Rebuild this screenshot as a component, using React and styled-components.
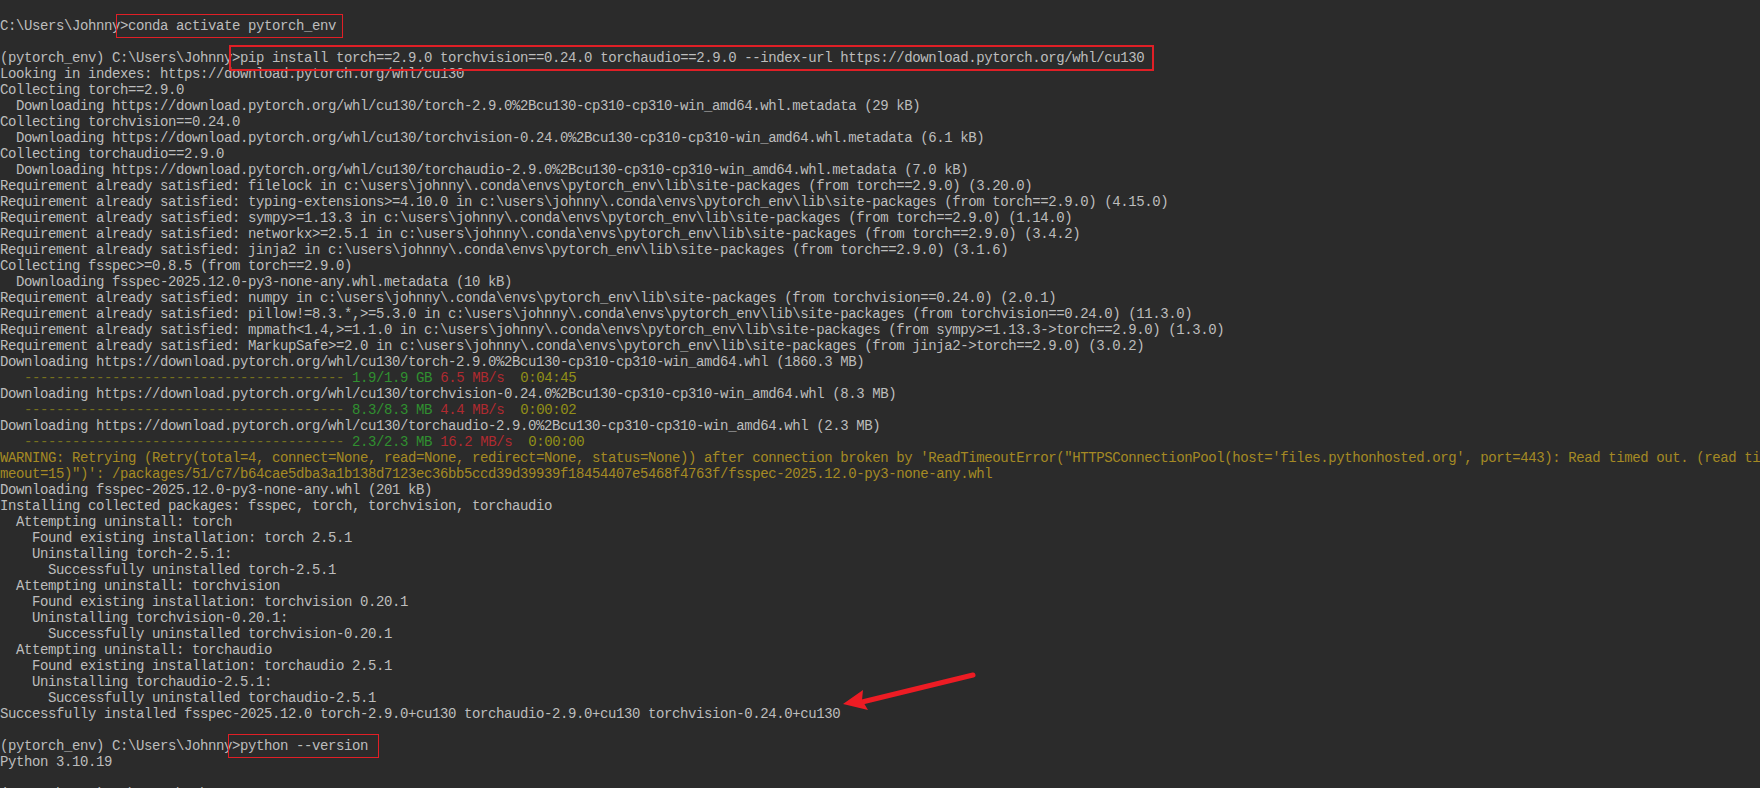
import React from "react";
import styled, { createGlobalStyle } from "styled-components";

const GlobalStyle = createGlobalStyle`
  html, body {
    margin: 0;
    padding: 0;
    background: #2b2b2b;
    overflow: hidden;
  }
`;

const Console = styled.div`
  position: relative;
  width: 1760px;
  height: 788px;
  box-sizing: border-box;
  padding-top: 3px;
  overflow: hidden;
  background: #2b2b2b;
  color: #bdbdbd;
  font-family: "Liberation Mono", monospace;
  font-size: 14px;
  letter-spacing: -0.4px;
`;

const Row = styled.div`
  height: 16px;
  line-height: 15px;
  white-space: pre;
  color: ${(p) => p.$color || "inherit"};
`;

// red rectangle somebody drew on the screenshot
const Mark = styled.span`
  position: relative;
  &::after {
    content: "";
    position: absolute;
    top: ${(p) => p.$top}px;
    bottom: ${(p) => p.$top}px;
    left: ${(p) => p.$left}px;
    right: ${(p) => p.$right}px;
    border: ${(p) => p.$weight}px solid #e01f26;
  }
`;

const Dash = styled.span`
  color: #77701f;
`;
const Done = styled.span`
  color: #309030;
`;
const Speed = styled.span`
  color: #b02a30;
`;
const Eta = styled.span`
  color: #929018;
`;

const ArrowSvg = styled.svg`
  position: absolute;
  left: 836px;
  top: 668px;
`;

const site = "c:\\users\\johnny\\.conda\\envs\\pytorch_env\\lib\\site-packages";
const whl = "https://download.pytorch.org/whl/cu130";
const bar = "-".repeat(40);
const WARN = "#a58a24";

const Progress = ({ done, speed, eta }) => (
  <Row>
    {"   "}
    <Dash>{bar}</Dash> <Done>{done}</Done> <Speed>{speed}</Speed> <Eta>{eta}</Eta>
  </Row>
);

const Prompt = ({ env, children, top, left, right, weight }) => (
  <Row>
    {env ? "(pytorch_env) " : ""}C:\Users\Johnny
    <Mark $top={top} $left={left} $right={right} $weight={weight}>{children}</Mark>
  </Row>
);

const App = () => (
  <>
    <GlobalStyle />
    <Console>
      <Row />
      <Prompt top={-4} left={-4} right={-7} weight={1}>{">conda activate pytorch_env"}</Prompt>
      <Row />
      <Prompt env top={-5} left={-3} right={-10} weight={2}>
        {`>pip install torch==2.9.0 torchvision==0.24.0 torchaudio==2.9.0 --index-url ${whl}`}
      </Prompt>
      <Row>Looking in indexes: {whl}</Row>
      <Row>Collecting torch==2.9.0</Row>
      <Row>{`  Downloading ${whl}/torch-2.9.0%2Bcu130-cp310-cp310-win_amd64.whl.metadata (29 kB)`}</Row>
      <Row>Collecting torchvision==0.24.0</Row>
      <Row>{`  Downloading ${whl}/torchvision-0.24.0%2Bcu130-cp310-cp310-win_amd64.whl.metadata (6.1 kB)`}</Row>
      <Row>Collecting torchaudio==2.9.0</Row>
      <Row>{`  Downloading ${whl}/torchaudio-2.9.0%2Bcu130-cp310-cp310-win_amd64.whl.metadata (7.0 kB)`}</Row>
      <Row>{`Requirement already satisfied: filelock in ${site} (from torch==2.9.0) (3.20.0)`}</Row>
      <Row>{`Requirement already satisfied: typing-extensions>=4.10.0 in ${site} (from torch==2.9.0) (4.15.0)`}</Row>
      <Row>{`Requirement already satisfied: sympy>=1.13.3 in ${site} (from torch==2.9.0) (1.14.0)`}</Row>
      <Row>{`Requirement already satisfied: networkx>=2.5.1 in ${site} (from torch==2.9.0) (3.4.2)`}</Row>
      <Row>{`Requirement already satisfied: jinja2 in ${site} (from torch==2.9.0) (3.1.6)`}</Row>
      <Row>{"Collecting fsspec>=0.8.5 (from torch==2.9.0)"}</Row>
      <Row>{"  Downloading fsspec-2025.12.0-py3-none-any.whl.metadata (10 kB)"}</Row>
      <Row>{`Requirement already satisfied: numpy in ${site} (from torchvision==0.24.0) (2.0.1)`}</Row>
      <Row>{`Requirement already satisfied: pillow!=8.3.*,>=5.3.0 in ${site} (from torchvision==0.24.0) (11.3.0)`}</Row>
      <Row>{`Requirement already satisfied: mpmath<1.4,>=1.1.0 in ${site} (from sympy>=1.13.3->torch==2.9.0) (1.3.0)`}</Row>
      <Row>{`Requirement already satisfied: MarkupSafe>=2.0 in ${site} (from jinja2->torch==2.9.0) (3.0.2)`}</Row>
      <Row>{`Downloading ${whl}/torch-2.9.0%2Bcu130-cp310-cp310-win_amd64.whl (1860.3 MB)`}</Row>
      <Progress done="1.9/1.9 GB" speed="6.5 MB/s" eta=" 0:04:45" />
      <Row>{`Downloading ${whl}/torchvision-0.24.0%2Bcu130-cp310-cp310-win_amd64.whl (8.3 MB)`}</Row>
      <Progress done="8.3/8.3 MB" speed="4.4 MB/s" eta=" 0:00:02" />
      <Row>{`Downloading ${whl}/torchaudio-2.9.0%2Bcu130-cp310-cp310-win_amd64.whl (2.3 MB)`}</Row>
      <Progress done="2.3/2.3 MB" speed="16.2 MB/s" eta=" 0:00:00" />
      <Row $color={WARN}>{`WARNING: Retrying (Retry(total=4, connect=None, read=None, redirect=None, status=None)) after connection broken by 'ReadTimeoutError("HTTPSConnectionPool(host='files.pythonhosted.org', port=443): Read timed out. (read ti`}</Row>
      <Row $color={WARN}>{`meout=15)")': /packages/51/c7/b64cae5dba3a1b138d7123ec36bb5ccd39d39939f18454407e5468f4763f/fsspec-2025.12.0-py3-none-any.whl`}</Row>
      <Row>Downloading fsspec-2025.12.0-py3-none-any.whl (201 kB)</Row>
      <Row>Installing collected packages: fsspec, torch, torchvision, torchaudio</Row>
      <Row>{"  Attempting uninstall: torch"}</Row>
      <Row>{"    Found existing installation: torch 2.5.1"}</Row>
      <Row>{"    Uninstalling torch-2.5.1:"}</Row>
      <Row>{"      Successfully uninstalled torch-2.5.1"}</Row>
      <Row>{"  Attempting uninstall: torchvision"}</Row>
      <Row>{"    Found existing installation: torchvision 0.20.1"}</Row>
      <Row>{"    Uninstalling torchvision-0.20.1:"}</Row>
      <Row>{"      Successfully uninstalled torchvision-0.20.1"}</Row>
      <Row>{"  Attempting uninstall: torchaudio"}</Row>
      <Row>{"    Found existing installation: torchaudio 2.5.1"}</Row>
      <Row>{"    Uninstalling torchaudio-2.5.1:"}</Row>
      <Row>{"      Successfully uninstalled torchaudio-2.5.1"}</Row>
      <Row>Successfully installed fsspec-2025.12.0 torch-2.9.0+cu130 torchaudio-2.9.0+cu130 torchvision-0.24.0+cu130</Row>
      <Row />
      <Prompt env top={-4} left={-4} right={-11} weight={1}>{">python --version"}</Prompt>
      <Row>Python 3.10.19</Row>
      <Row />
      <Row>(pytorch_env) C:\Users\Johnny&gt;</Row>
      <ArrowSvg width="145" height="50" viewBox="836 668 145 50">
        <path d="M973 675 L858 703" stroke="#ed1c24" strokeWidth="5" strokeLinecap="round" fill="none" />
        <path d="M843 704 L863 690 L862 700 L868 710 Z" fill="#ed1c24" />
      </ArrowSvg>
    </Console>
  </>
);

export default App;
